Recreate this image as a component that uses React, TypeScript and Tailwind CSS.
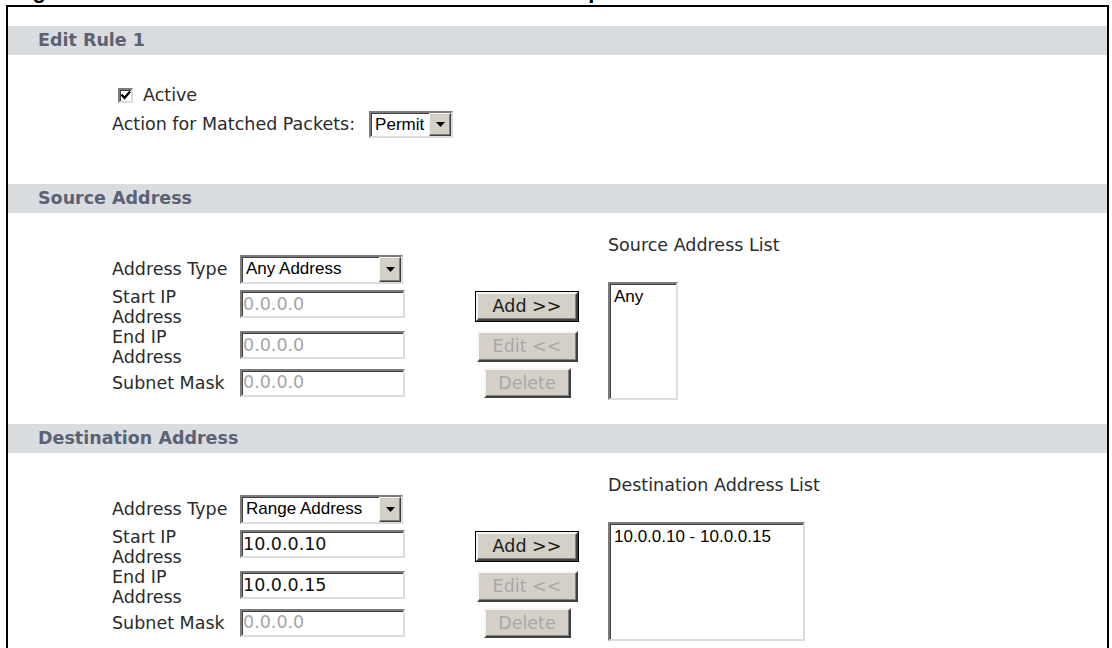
import React from 'react';

// Shared font stacks: Verdana-like for labels, MS Sans-like for list/select text
const ui = "font-['DejaVu_Sans',Verdana,sans-serif]";
const ms = "font-['Liberation_Sans',Arial,sans-serif]";

const inset =
  'border-2 border-t-[#7b7b7b] border-l-[#7b7b7b] border-b-[#dcdcdc] border-r-[#dcdcdc] shadow-[inset_1px_1px_0_#404040]';

function SectionBar({ title }: { title: string }) {
  return (
    <div className="flex h-[29px] items-center bg-[#d9dde0] pl-[30px]">
      <span className={`${ui} text-[17.5px] font-bold leading-none text-[#5b6275]`}>{title}</span>
    </div>
  );
}

function DropArrow() {
  return (
    <span className="flex h-full w-[22px] items-center justify-center border border-t-[#f4f4f4] border-l-[#f4f4f4] border-b-[#404040] border-r-[#404040] bg-[#d4d0c8] shadow-[inset_-1px_-1px_0_#808080]">
      <svg width="9" height="5" viewBox="0 0 9 5">
        <path d="M0 0h9L4.5 5z" fill="#000" />
      </svg>
    </span>
  );
}

function Select({ value, className }: { value: string; className: string }) {
  return (
    <div className={`flex items-stretch bg-white ${inset} ${className}`}>
      <span className={`${ms} flex flex-1 items-center pl-[4px] text-[17px] text-black`}>{value}</span>
      <DropArrow />
    </div>
  );
}

function TextBox({ value, disabled }: { value: string; disabled?: boolean }) {
  return (
    <div
      className={`flex h-[28px] w-[165px] items-center bg-white pl-[1px] ${inset} ${ui} text-[17.5px] ${
        disabled ? 'text-[#a6a6a6]' : 'text-[#111]'
      }`}
    >
      {value}
    </div>
  );
}

function Btn({
  label,
  disabled,
  primary,
  className,
}: {
  label: string;
  disabled?: boolean;
  primary?: boolean;
  className: string;
}) {
  const face = (
    <span
      className={`flex h-full w-full items-center justify-center border-2 border-t-[#f6f6f6] border-l-[#f6f6f6] border-b-[#404040] border-r-[#404040] bg-[#d4d0c8] shadow-[inset_-1px_-1px_0_#808080] ${ui} text-[17.5px] ${
        disabled ? 'text-[#a8a8a8]' : 'text-[#1a1a1a]'
      }`}
    >
      {label}
    </span>
  );
  if (primary) return <div className={`border border-black ${className}`}>{face}</div>;
  return <div className={className}>{face}</div>;
}

function FieldLabel({ children }: { children: React.ReactNode }) {
  return <div className={`w-[128px] ${ui} text-[17.5px] leading-[20px] text-[#2b2b2b]`}>{children}</div>;
}

type AddressProps = {
  listTitle: string;
  addrType: string;
  start: string;
  end: string;
  rangeEditable?: boolean;
  entry: string;
  listClass: string;
};

function AddressSection({ listTitle, addrType, start, end, rangeEditable, entry, listClass }: AddressProps) {
  return (
    <div className="flex items-start pb-[24px] pl-[104px]">
      {/* address fields */}
      <div className="mt-[41px] flex w-[293px] flex-col">
        <div className="flex h-[30px] items-center">
          <FieldLabel>Address Type</FieldLabel>
          <Select value={addrType} className="h-[29px] w-[163px]" />
        </div>
        <div className="mt-[3px] flex h-[40px] items-start">
          <FieldLabel>
            Start IP
            <br />
            Address
          </FieldLabel>
          <div className="mt-[3px]">
            <TextBox value={start} disabled={!rangeEditable} />
          </div>
        </div>
        <div className="flex h-[40px] items-start">
          <FieldLabel>
            End IP
            <br />
            Address
          </FieldLabel>
          <div className="mt-[4px]">
            <TextBox value={end} disabled={!rangeEditable} />
          </div>
        </div>
        <div className="flex h-[31px] items-center">
          <FieldLabel>Subnet Mask</FieldLabel>
          <TextBox value="0.0.0.0" disabled />
        </div>
      </div>

      {/* list actions */}
      <div className="ml-[70px] mt-[78px] flex w-[104px] flex-col items-center">
        <Btn label="Add >>" primary className="h-[31px] w-[104px]" />
        <Btn label="Edit <<" disabled className="mt-[9px] h-[31px] w-[101px]" />
        <Btn label="Delete" disabled className="mt-[6px] h-[30px] w-[87px]" />
      </div>

      {/* configured addresses */}
      <div className="ml-[29px] mt-[22px] flex flex-col">
        <div className={`${ui} text-[17.5px] leading-[20px] text-[#2b2b2b]`}>{listTitle}</div>
        <div className={`mt-[27px] bg-white ${inset} ${listClass}`}>
          <div className={`${ms} pl-[4px] pt-[3px] text-[17px] leading-[20px] text-black`}>{entry}</div>
        </div>
      </div>
    </div>
  );
}

export default function App() {
  return (
    <div className="h-[648px] w-[1112px] overflow-hidden bg-white">
      {/* figure caption, cut off above the frame */}
      <div className="relative h-[5px] overflow-hidden">
        <div className={`absolute left-0 top-[-20px] flex text-[22px] font-bold leading-[22px] text-black ${ms}`}>
          <span className="ml-[13px]">Figure 62</span>
          <span className="ml-[222px]">Firewall Edit Rule: Example</span>
        </div>
      </div>

      <div className="ml-[6px] mr-[3px] h-[643px] border-x-2 border-t-2 border-black">
        <div className="pt-[19px]">
          <SectionBar title="Edit Rule 1" />
          <div className="pb-[46px] pt-[30px]">
            <div className="flex h-[20px] items-center pl-[110px]">
              <span className={`relative flex h-[15px] w-[15px] items-center justify-center bg-white ${inset}`}>
                <svg width="11" height="10" viewBox="0 0 11 10" className="absolute left-[0px] top-[0px]">
                  <path d="M1.5 4.5l3 3.5L10 1.5" stroke="#000" strokeWidth="2.2" fill="none" />
                </svg>
              </span>
              <span className={`ml-[10px] ${ui} text-[17.5px] text-[#2b2b2b]`}>Active</span>
            </div>
            <div className="mt-[6px] flex h-[27px] items-center pl-[104px]">
              <span className={`${ui} text-[17.5px] text-[#2b2b2b]`}>Action for Matched Packets:</span>
              <Select value="Permit" className="ml-[14px] h-[27px] w-[84px]" />
            </div>
          </div>

          <SectionBar title="Source Address" />
          <AddressSection
            listTitle="Source Address List"
            addrType="Any Address"
            start="0.0.0.0"
            end="0.0.0.0"
            entry="Any"
            listClass="h-[118px] w-[70px]"
          />

          <SectionBar title="Destination Address" />
          <AddressSection
            listTitle="Destination Address List"
            addrType="Range Address"
            start="10.0.0.10"
            end="10.0.0.15"
            rangeEditable
            entry="10.0.0.10 - 10.0.0.15"
            listClass="h-[119px] w-[197px]"
          />
        </div>
      </div>
    </div>
  );
}
